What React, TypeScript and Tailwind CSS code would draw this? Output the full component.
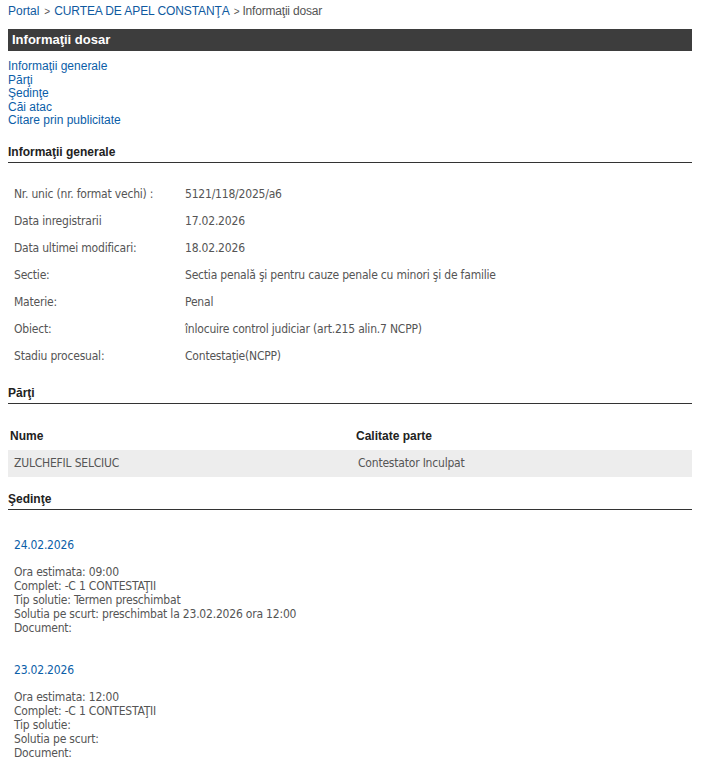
import React from "react";

const body = { fontFamily: '"DejaVu Sans Condensed", "DejaVu Sans", sans-serif', fontStretch: "semi-condensed", letterSpacing: "-0.2px" } as React.CSSProperties;

const info: [string, string][] = [
  ["Nr. unic (nr. format vechi) :", "5121/118/2025/a6"],
  ["Data inregistrarii", "17.02.2026"],
  ["Data ultimei modificari:", "18.02.2026"],
  ["Sectie:", "Sectia penală şi pentru cauze penale cu minori şi de familie"],
  ["Materie:", "Penal"],
  ["Obiect:", "înlocuire control judiciar (art.215 alin.7 NCPP)"],
  ["Stadiu procesual:", "Contestaţie(NCPP)"],
];

const sedinte = [
  {
    date: "24.02.2026",
    lines: [
      "Ora estimata: 09:00",
      "Complet: -C 1 CONTESTAŢII",
      "Tip solutie: Termen preschimbat",
      "Solutia pe scurt: preschimbat la 23.02.2026 ora 12:00",
      "Document:",
    ],
  },
  {
    date: "23.02.2026",
    lines: [
      "Ora estimata: 12:00",
      "Complet: -C 1 CONTESTAŢII",
      "Tip solutie:",
      "Solutia pe scurt:",
      "Document:",
    ],
  },
];

function SectionHeader({ title }: { title: string }) {
  return (
    <div className="border-b border-[#333] pb-[3px] text-[12px] font-bold leading-[14px] text-[#222]">
      {title}
    </div>
  );
}

export default function App() {
  return (
    <div className="min-h-[765px] bg-white pb-4 pl-2 pr-[10px] pt-[4px] font-['Liberation_Sans',Arial,sans-serif] text-[12px]">
      <div className="leading-[14px] text-[#555]">
        <span className="text-[#0f5aa0]">Portal</span>
        <span className="ml-[5px] mr-[4px] text-[10px]">&gt;</span>
        <span className="tracking-[-0.1px] text-[#0f5aa0]">CURTEA DE APEL CONSTANŢA</span>
        <span className="ml-[4px] mr-[3px] text-[10px]">&gt;</span>
        <span className="tracking-[-0.2px]">Informaţii dosar</span>
      </div>

      <div className="mt-[10px] flex h-[22px] items-center bg-[#3d3d3d] pl-[4px] text-[13px] font-bold text-white">
        Informaţii dosar
      </div>

      <div className="mt-[9px] flex flex-col text-[12px] leading-[13.5px] text-[#0b5ea8]">
        <span>Informaţii generale</span>
        <span>Părţi</span>
        <span>Şedinţe</span>
        <span>Căi atac</span>
        <span>Citare prin publicitate</span>
      </div>

      <div className="mt-[17px]">
        <SectionHeader title="Informaţii generale" />
      </div>

      <div className="mt-[18px] flex flex-col text-[12px] text-[#555]" style={body}>
        {info.map(([k, v]) => (
          <div key={k} className="flex h-[27px] items-center">
            <div className="w-[177px] pl-[6px]">{k}</div>
            <div>{v}</div>
          </div>
        ))}
      </div>

      <div className="mt-[16px]">
        <SectionHeader title="Părţi" />
      </div>

      <div className="mt-[19px]">
        <div className="flex h-[27px] items-center text-[12px] font-bold text-[#222]">
          <div className="w-[348px] pl-[2px]">Nume</div>
          <div>Calitate parte</div>
        </div>
        <div className="flex h-[27px] items-center bg-[#ededed] text-[12px] text-[#555]" style={body}>
          <div className="w-[350px] pl-[6px]">ZULCHEFIL SELCIUC</div>
          <div>Contestator Inculpat</div>
        </div>
      </div>

      <div className="mt-[15px]">
        <SectionHeader title="Şedinţe" />
      </div>

      <div className="mt-[28px] pl-[6px] text-[12px]" style={body}>
        {sedinte.map((s, i) => (
          <div key={i} className={i > 0 ? "mt-[27px]" : ""}>
            <div className="leading-[14px] text-[#0b5ea8]">{s.date}</div>
            <div className="mt-[13px] flex flex-col leading-[14.2px] text-[#555]">
              {s.lines.map((l) => (
                <span key={l}>{l}</span>
              ))}
            </div>
          </div>
        ))}
      </div>
    </div>
  );
}
